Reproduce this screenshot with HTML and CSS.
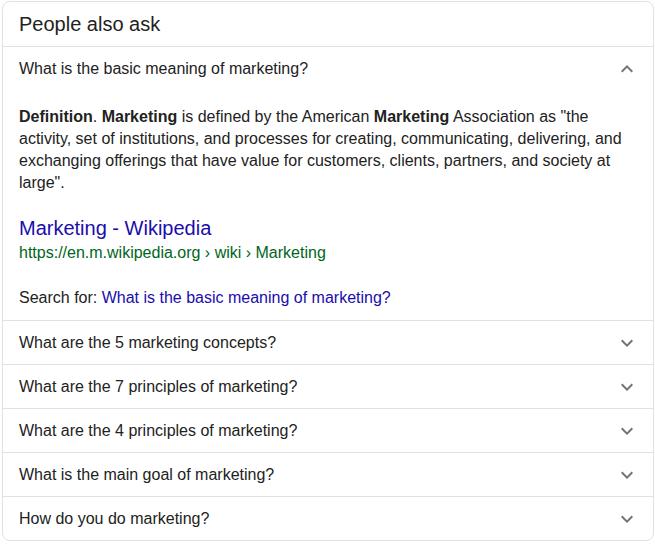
FILE: index.html
```html
<!DOCTYPE html>
<html>
<head>
<meta charset="utf-8">
<link rel="stylesheet" href="styles.css">
</head>
<body>
<div class="card">
  <div class="title">People also ask</div>
  <div class="item open">
    <div class="q">
      <span>What is the basic meaning of marketing?</span>
      <svg class="chev" width="24" height="24" viewBox="0 0 24 24"><path d="M7.41 15.41L12 10.83l4.59 4.58L18 14l-6-6-6 6z"/></svg>
    </div>
    <div class="answer">
      <p class="def"><b>Definition</b>. <b>Marketing</b> is defined by the American <b>Marketing</b> Association as "the activity, set of institutions, and processes for creating, communicating, delivering, and exchanging offerings that have value for customers, clients, partners, and society at large".</p>
      <a class="link" href="#">Marketing - Wikipedia</a>
      <div class="cite">https://en.m.wikipedia.org › wiki › Marketing</div>
      <div class="search">Search for: <a href="#">What is the basic meaning of marketing?</a></div>
    </div>
  </div>
  <div class="item">
    <div class="q"><span>What are the 5 marketing concepts?</span><svg class="chev" width="24" height="24" viewBox="0 0 24 24"><path d="M7.41 8.59L12 13.17l4.59-4.58L18 10l-6 6-6-6z"/></svg></div>
  </div>
  <div class="item">
    <div class="q"><span>What are the 7 principles of marketing?</span><svg class="chev" width="24" height="24" viewBox="0 0 24 24"><path d="M7.41 8.59L12 13.17l4.59-4.58L18 10l-6 6-6-6z"/></svg></div>
  </div>
  <div class="item">
    <div class="q"><span>What are the 4 principles of marketing?</span><svg class="chev" width="24" height="24" viewBox="0 0 24 24"><path d="M7.41 8.59L12 13.17l4.59-4.58L18 10l-6 6-6-6z"/></svg></div>
  </div>
  <div class="item">
    <div class="q"><span>What is the main goal of marketing?</span><svg class="chev" width="24" height="24" viewBox="0 0 24 24"><path d="M7.41 8.59L12 13.17l4.59-4.58L18 10l-6 6-6-6z"/></svg></div>
  </div>
  <div class="item">
    <div class="q"><span>How do you do marketing?</span><svg class="chev" width="24" height="24" viewBox="0 0 24 24"><path d="M7.41 8.59L12 13.17l4.59-4.58L18 10l-6 6-6-6z"/></svg></div>
  </div>
</div>
</body>
</html>
```
FILE: styles.css
```css
html, body {
  margin: 0;
  padding: 0;
  background: #fff;
}
body {
  font-family: "Liberation Sans", Arial, sans-serif;
  color: #222;
}
.card {
  margin: 1px 1px 0 2px;
  width: 652px;
  border: 1px solid #dfe1e5;
  border-radius: 8px;
  box-sizing: border-box;
  overflow: hidden;
}
.title {
  height: 44px;
  padding: 0 16px;
  font-size: 20px;
  line-height: 44px;
  color: #222;
  border-bottom: 1px solid #dfe1e5;
}
.item {
  border-bottom: 1px solid #dfe1e5;
}
.item:last-child {
  border-bottom: none;
}
.q {
  height: 43px;
  display: flex;
  align-items: center;
  justify-content: space-between;
  padding: 0 16px;
  font-size: 16px;
  color: #222;
}
.chev {
  fill: #70757a;
  margin-right: -2px;
}
.answer {
  padding: 0 16px 10px;
}
.def {
  margin: 16px 0 0;
  font-size: 16px;
  line-height: 22px;
  color: #222;
}
.def b {
  font-weight: bold;
}
.link {
  display: block;
  margin-top: 21px;
  font-size: 20px;
  line-height: 26px;
  color: #1a0dab;
  text-decoration: none;
}
.cite {
  font-size: 16px;
  line-height: 24px;
  color: #006621;
}
.search {
  margin-top: 21px;
  font-size: 16px;
  line-height: 24px;
  color: #222;
}
.search a {
  color: #1a0dab;
  text-decoration: none;
}
```
